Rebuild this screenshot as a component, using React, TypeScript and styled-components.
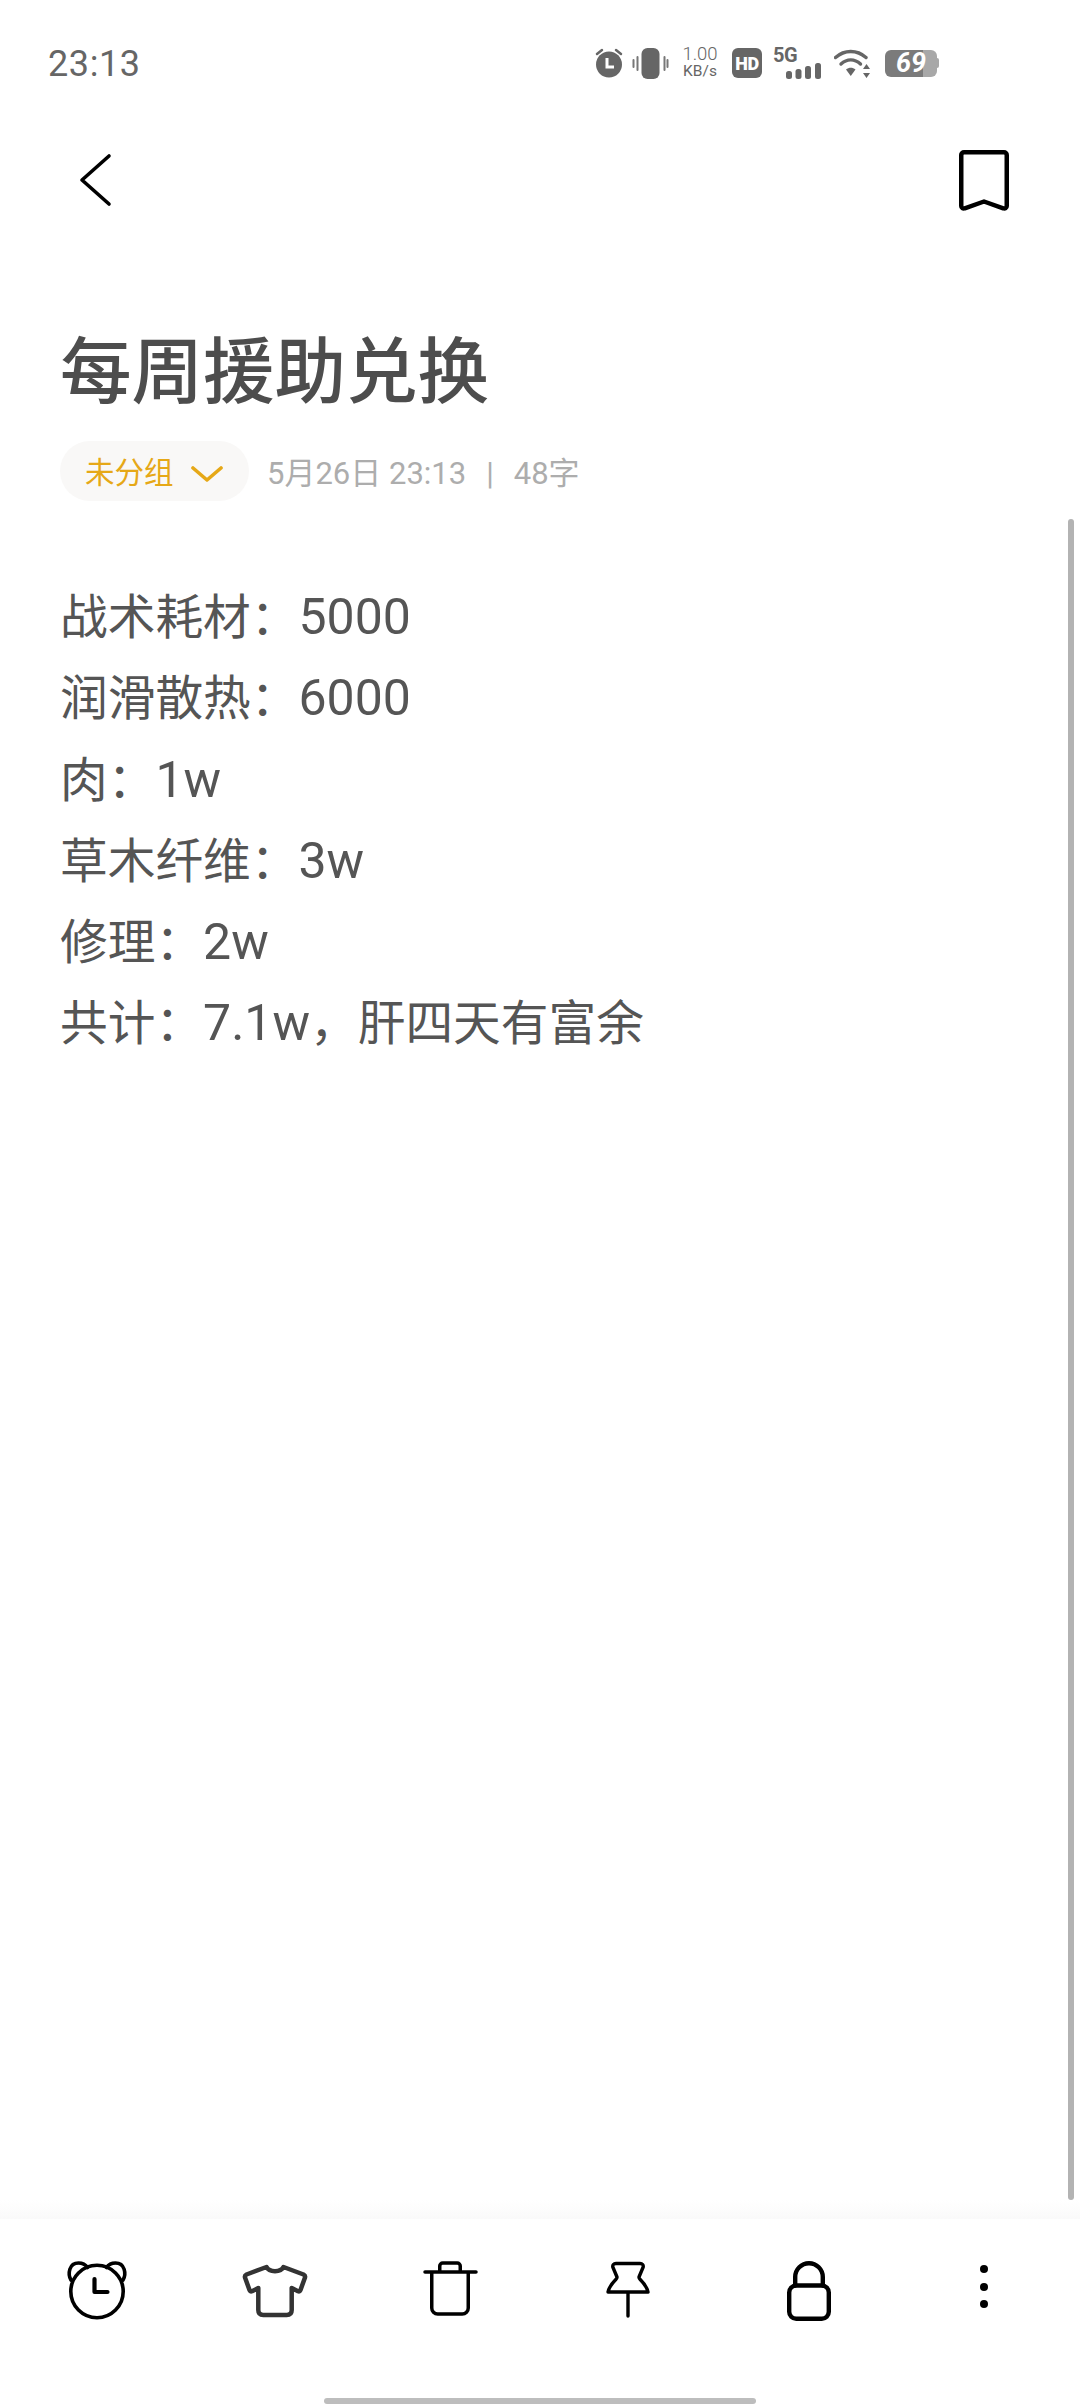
import React from 'react';
import styled, { createGlobalStyle } from 'styled-components';

const GlobalStyle = createGlobalStyle`
  html, body {
    margin: 0;
    padding: 0;
    background: #fff;
  }
  body {
    font-family: "Roboto", "Noto Sans CJK SC", sans-serif;
  }
`;

const Page = styled.div`
  position: relative;
  width: 1080px;
  height: 2408px;
  display: flex;
  flex-direction: column;
  background: #fff;
  overflow: hidden;
`;

const StatusBar = styled.div`
  height: 126px;
  display: flex;
  align-items: center;
  justify-content: space-between;
  padding: 0 141px 0 48px;
`;

const Clock = styled.div`
  font-size: 36px;
  color: #666;
  letter-spacing: 0.6px;
  padding-top: 2px;
`;

const StatusIcons = styled.div`
  display: flex;
  align-items: center;
`;

const Speed = styled.div`
  width: 36px;
  margin: 0 14px 0 13px;
  display: flex;
  flex-direction: column;
  align-items: center;
  color: #666;
  line-height: 17px;
  font-size: 18.5px;
  font-weight: 300;
`;

const SpeedUnit = styled.span`
  font-size: 15.5px;
  font-weight: 400;
`;

const HdBadge = styled.div`
  width: 30px;
  height: 30px;
  border-radius: 6px;
  background: #666;
  color: #fff;
  font-size: 18px;
  font-weight: 900;
  display: flex;
  align-items: center;
  justify-content: center;
  letter-spacing: -0.5px;
`;

const Signal = styled.div`
  position: relative;
  width: 48px;
  height: 32px;
  margin: 0 13px 0 11px;
`;

const SignalLabel = styled.span`
  position: absolute;
  left: 0;
  top: -2px;
  font-size: 20px;
  line-height: 20px;
  font-weight: 700;
  letter-spacing: -0.5px;
  color: #666;
`;

const Battery = styled.div`
  width: 52px;
  height: 27px;
  margin-left: 14px;
  border-radius: 6px;
  background: linear-gradient(to right, #7b7b7b 0 73%, #a8a8a8 73% 100%);
  color: #fff;
  font-size: 27px;
  font-weight: 700;
  font-style: italic;
  display: flex;
  align-items: center;
  justify-content: center;
`;

const BatteryTip = styled.div`
  width: 2px;
  height: 10px;
  background: #a8a8a8;
  border-radius: 0 2px 2px 0;
`;

const NavBar = styled.div`
  height: 108px;
  display: flex;
  align-items: center;
  justify-content: space-between;
  padding: 0 70px 0 78px;
`;

const LineIcon = styled.svg<{ $ink?: string }>`
  display: block;
  fill: none;
  stroke: ${(p) => p.$ink || '#000'};
  stroke-linecap: round;
  stroke-linejoin: round;
`;

const Main = styled.main`
  flex: 1;
  padding: 89px 60px 0 60px;
`;

const Title = styled.h1`
  margin: 0;
  font-size: 71.5px;
  line-height: 100px;
  font-weight: 500;
  color: #4d4d4d;
`;

const MetaRow = styled.div`
  margin-top: 18px;
  display: flex;
  align-items: center;
  gap: 18px;
`;

const GroupPill = styled.div`
  width: 189px;
  height: 60px;
  box-sizing: border-box;
  padding: 0 26px 2px 25px;
  border-radius: 30px;
  background: #f9f8f7;
  display: flex;
  align-items: center;
  justify-content: space-between;
  color: #e6a817;
  font-size: 29.5px;
`;

const PillChevron = styled.svg`
  display: block;
  margin-top: 7px;
  fill: none;
  stroke: #e6a817;
  stroke-width: 3.6;
  stroke-linecap: round;
  stroke-linejoin: round;
`;

const MetaText = styled.div`
  padding-bottom: 2px;
  font-size: 31px;
  color: #adadad;
  white-space: pre;
`;

const MetaSeparator = styled.span`
  margin: 0 20px;
`;

const Body = styled.div`
  margin-top: 77px;
  font-size: 47.7px;
  line-height: 81.3px;
  color: #555;
`;

const Line = styled.div``;

const Num = styled.span`
  font-size: 50px;
  line-height: 1;
`;

const ScrollThumb = styled.div`
  position: absolute;
  right: 6px;
  top: 519px;
  width: 6px;
  height: 1681px;
  border-radius: 3px;
  background: #b3b3b3;
`;

const Shade = styled.div`
  height: 19px;
  background: linear-gradient(to bottom, #fff, #fafafa);
`;

const Toolbar = styled.nav`
  height: 189px;
`;

const ToolRow = styled.div`
  width: 1068px;
  padding: 42px 0 0 8px;
  display: grid;
  grid-template-columns: repeat(6, 178px);
  justify-items: center;
`;

const HomeBar = styled.div`
  position: absolute;
  left: 324px;
  bottom: 4px;
  width: 432px;
  height: 6px;
  border-radius: 3px;
  background: #bdbdbd;
`;

const lines: [string, string][] = [
  ['战术耗材：', '5000'],
  ['润滑散热：', '6000'],
  ['肉：', '1w'],
  ['草木纤维：', '3w'],
  ['修理：', '2w'],
];

export default function App() {
  return (
    <Page>
      <GlobalStyle />
      <StatusBar>
        <Clock>23:13</Clock>
        <StatusIcons>
          <svg width="30" height="30" viewBox="0 0 30 30">
            <circle cx="15" cy="16.5" r="13" fill="#666" />
            <path d="M3 6l5-4M27 6l-5-4" stroke="#666" strokeWidth="2.5" strokeLinecap="round" />
            <path d="M13 10v9h7" fill="none" stroke="#fff" strokeWidth="3" />
          </svg>
          <svg width="37" height="31" viewBox="0 0 37 31" style={{ marginLeft: 8 }}>
            <rect x="9.5" y="0" width="18" height="31" rx="6" fill="#666" />
            <path d="M5.5 9v13M1.5 12v7M32.5 9v13M35.5 12v7" stroke="#777" strokeWidth="2" strokeLinecap="round" />
          </svg>
          <Speed>
            <span>1.00</span>
            <SpeedUnit>KB/s</SpeedUnit>
          </Speed>
          <HdBadge>HD</HdBadge>
          <Signal>
            <SignalLabel>5G</SignalLabel>
            <svg width="35" height="16" viewBox="0 0 35 16" style={{ position: 'absolute', left: 13, bottom: 0 }}>
              <rect x="0" y="8" width="6" height="8" rx="2.5" fill="#666" />
              <rect x="9.5" y="6" width="6" height="10" rx="2.5" fill="#666" />
              <rect x="19" y="3" width="6" height="13" rx="2.5" fill="#666" />
              <rect x="29" y="0" width="6" height="16" rx="2.5" fill="#666" />
            </svg>
          </Signal>
          <svg width="37" height="29" viewBox="0 0 37 29">
            <path d="M1.5 8.5C10.5 .5 23 .5 32 8.5" fill="none" stroke="#666" strokeWidth="3.4" strokeLinecap="round" />
            <path d="M7 15c6-5.5 13.5-5.5 19.5 0" fill="none" stroke="#666" strokeWidth="3.4" strokeLinecap="round" />
            <path d="M12 20.5c3-2.5 6.5-2.5 9.5 0L16.75 27z" fill="#666" />
            <path d="M32.5 15l3.5 5h-7zM32.5 29l3.5-5h-7z" fill="#666" />
          </svg>
          <Battery>69</Battery>
          <BatteryTip />
        </StatusIcons>
      </StatusBar>

      <NavBar>
        <LineIcon width="36" height="54" viewBox="0 0 36 54" strokeWidth="3.6">
          <path d="M31 3 4 27l27 24" />
        </LineIcon>
        <LineIcon width="52" height="63" viewBox="0 0 52 63" strokeWidth="4.5">
          <path d="M6 3.25h40a2.75 2.75 0 0 1 2.75 2.75v51a2.5 2.5 0 0 1-3.5 2.3L26 52.5 6.75 59.3A2.5 2.5 0 0 1 3.25 57V6A2.75 2.75 0 0 1 6 3.25z" />
        </LineIcon>
      </NavBar>

      <Main>
        <Title>每周援助兑换</Title>
        <MetaRow>
          <GroupPill>
            未分组
            <PillChevron width="32" height="16" viewBox="0 0 32 16">
              <path d="M2 2l14 12L30 2" />
            </PillChevron>
          </GroupPill>
          <MetaText>
            5月26日 23:13<MetaSeparator>|</MetaSeparator>48字
          </MetaText>
        </MetaRow>
        <Body>
          {lines.map(([label, value]) => (
            <Line key={label}>
              {label}
              <Num>{value}</Num>
            </Line>
          ))}
          <Line>
            共计：<Num>7.1w</Num>，肝四天有富余
          </Line>
        </Body>
      </Main>

      <ScrollThumb />
      <Shade />

      <Toolbar>
        <ToolRow>
          <LineIcon width="66" height="60" viewBox="0 0 66 60" strokeWidth="3.6">
            <circle cx="33" cy="30.5" r="26.2" />
            <path d="M7 19C3.5 13 5 2 14.5 2c4 0 7 1.5 9 4.5M59 19c3.5-6 2-17-7.5-17-4 0-7 1.5-9 4.5" />
            <path d="M30.5 18v13h13" strokeWidth="4.2" />
          </LineIcon>
          <LineIcon $ink="#333" width="66" height="60" viewBox="0 0 66 60" strokeWidth="4.5">
            <path d="M24.5 6c2.5 5.5 14.5 5.5 17 0l20 7.5q2 1 1.500 3L58.500 29q-.7 2-2.500 1.200L49.700 27v22q0 5-5 5H21.300q-5 0-5-5V27L10 30.200q-1.800.8-2.500-1.200L3 16.500q-.5-2 1.500-3z" />
          </LineIcon>
          <LineIcon width="66" height="60" viewBox="0 0 66 60" strokeWidth="3.5">
            <path d="M5 11h51M11.750 11v36a6 6 0 0 0 6 6h24.500a6 6 0 0 0 6-6V11M19.750 11V5a3 3 0 0 1 3-3h14.500a3 3 0 0 1 3 3v6" />
          </LineIcon>
          <LineIcon width="66" height="60" viewBox="0 0 66 60" strokeWidth="3.4">
            <path d="M18 2.500h24c2.500 0 3.500 1.500 3.200 3.500L41 16c-.2 1 .3 1.500 1 2.200 4 4 7 8 8 12.800H10c1-4.800 4-8.800 8-12.800.7-.7 1.200-1.200 1-2.200L14.800 6c-.3-2 .7-3.500 3.200-3.500zM30 31v24" />
          </LineIcon>
          <LineIcon width="66" height="60" viewBox="0 0 66 60" strokeWidth="4.4">
            <rect x="13.2" y="24.5" width="39.6" height="33.3" rx="7" />
            <path d="M19.2 24.5V16a13.8 13.8 0 0 1 27.6 0v8.5" />
          </LineIcon>
          <svg width="66" height="60" viewBox="0 0 66 60">
            <circle cx="30" cy="8" r="4" fill="#000" />
            <circle cx="30" cy="26" r="4" fill="#000" />
            <circle cx="30" cy="43" r="4" fill="#000" />
          </svg>
        </ToolRow>
        <HomeBar />
      </Toolbar>
    </Page>
  );
}
